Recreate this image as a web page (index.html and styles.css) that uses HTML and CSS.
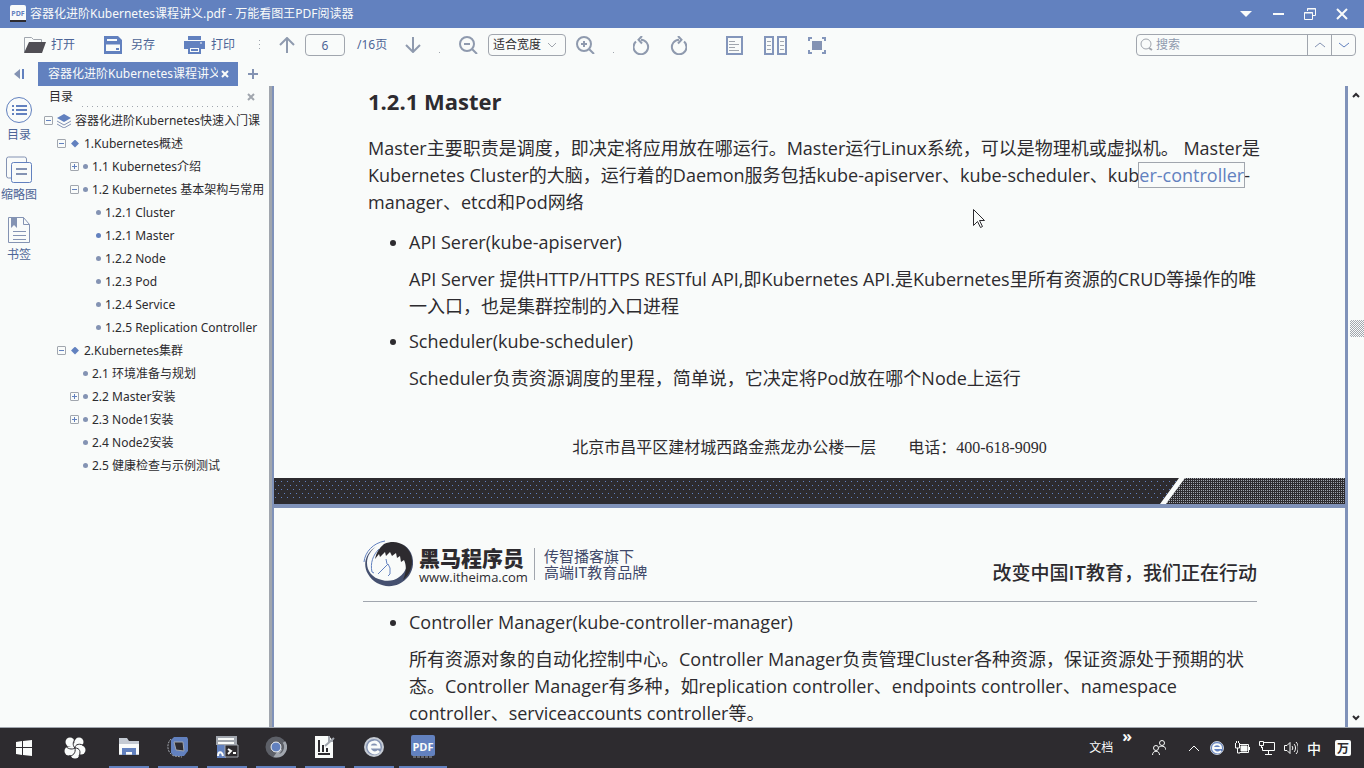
FILE: index.html
```html
<!DOCTYPE html>
<html lang="zh-CN">
<head>
<meta charset="utf-8">
<title>容器化进阶Kubernetes课程讲义.pdf - 万能看图王PDF阅读器</title>
<link rel="stylesheet" href="styles.css">
</head>
<body>
<div class="app">
  <header class="titlebar">
    <svg class="app-icon" width="16" height="18" viewBox="0 0 16 18"><rect width="16" height="17" rx="2" fill="#f9fbfa"/><rect x="0" y="15" width="16" height="2" fill="#2d2b2f"/><text x="8" y="11" text-anchor="middle" class="icon-text icon-text-small" fill="#6281bf">PDF</text></svg>
    <h1 class="title">容器化进阶Kubernetes课程讲义.pdf - 万能看图王PDF阅读器</h1>
    <div class="window-buttons">
      <button class="plain win" aria-label="菜单"><svg width="12" height="12"><path d="M0 3h12l-6 6z" fill="#f9fbfa"/></svg></button>
      <button class="plain win" aria-label="最小化"><svg width="12" height="12"><path d="M1 6h11" stroke="#f9fbfa" stroke-width="2"/></svg></button>
      <button class="plain win" aria-label="还原"><svg width="12" height="12" fill="none" stroke="#f9fbfa"><path d="M3.500 3V.5h8v7h-3M3 1h9M.5 4.500h8v7h-8zM0 5h9"/></svg></button>
      <button class="plain win" aria-label="关闭"><svg width="12" height="12"><path d="M1 1l10 10M11 1L1 11" stroke="#f9fbfa" stroke-width="2"/></svg></button>
    </div>
  </header>

  <div class="toolbar">
    <div class="file-actions">
      <button class="plain action"><svg width="22" height="18"><path d="M.5 16V1.500h7l2 2h8V6" fill="none" stroke="#a1a6ae"/><path d="M5 6h17l-4 11H0z" fill="#504e54"/></svg>打开</button>
      <button class="plain action"><svg width="22" height="18"><path d="M0 0h14l4 4v14H0z" fill="#6281bf"/><path d="M3 4h10M2 9.500h14" stroke="#f9fbfa" stroke-width="2"/><path d="M2 9h14v6H2z" fill="#f9fbfa"/><path d="M12 12h3v2h-3z" fill="#6281bf"/></svg>另存</button>
      <button class="plain action"><svg width="22" height="18"><path d="M4 0h13v4H4zM0 5h21v8h-4v-3H4v3H0z" fill="#6281bf"/><path d="M5 11h11v6H5zM7 14h7" fill="none" stroke="#6281bf" stroke-width="2"/><path d="M16 7h2" stroke="#f9fbfa"/></svg>打印</button>
    </div>
    <span class="sep"></span>
    <div class="group page-nav">
      <button class="plain" aria-label="上一页"><svg class="line-icon" width="16" height="16"><path d="M8 16V1M1 8l7-7 7 7"/></svg></button>
      <input class="page-input" aria-label="页码" value="6">
      <span class="page-total">/16页</span>
      <button class="plain" aria-label="下一页"><svg class="line-icon" width="16" height="16"><path d="M8 0v15M1 8l7 7 7-7"/></svg></button>
    </div>
    <span class="sep one"></span>
    <div class="group zoom-group">
      <button class="plain" aria-label="缩小"><svg class="line-icon" width="19" height="18"><circle cx="8" cy="8" r="7"/><path d="M13 13l5 5M5 8h6"/></svg></button>
      <span class="select-wrap"><select aria-label="缩放"><option>适合宽度</option></select><svg width="10" height="6"><path d="M1 1l4 4 4-4" fill="none" stroke="#a1a6ae"/></svg></span>
      <button class="plain" aria-label="放大"><svg class="line-icon" width="19" height="18"><circle cx="8" cy="8" r="7"/><path d="M13 13l5 5M5 8h6M8 5v6"/></svg></button>
    </div>
    <span class="sep one"></span>
    <div class="group rotate-group">
      <button class="plain" aria-label="向左旋转"><svg class="line-icon" width="18" height="19"><path d="M3 5.500A7.300 7.300 0 1 0 8 3.700M9 0L5.500 3.700 9 7.500"/></svg></button>
      <button class="plain" aria-label="向右旋转"><svg class="line-icon" width="18" height="19"><path d="M15 5.500A7.300 7.300 0 1 1 10 3.700M9 0l3.500 3.700L9 7.500"/></svg></button>
    </div>
    <div class="group view-group">
      <button class="plain" aria-label="单页"><svg width="17" height="19" fill="none"><path d="M1 1h15v17H1z" stroke="#8496bb" stroke-width="2"/><path d="M3 5.500h6M3 8.500h10M3 11.500h6M3 14.500h10" stroke="#a1a6ae"/></svg></button>
      <button class="plain" aria-label="双页"><svg width="23" height="19" fill="none"><path d="M1 1h8v17H1zM14 1h8v17h-8z" stroke="#8496bb" stroke-width="2"/><path d="M3 5.500h4M3 9.500h4M3 13.500h4M16 5.500h4M16 9.500h4M16 13.500h4" stroke="#a1a6ae"/></svg></button>
      <button class="plain" aria-label="全屏"><svg width="18" height="17"><path d="M1 4V1h3M14 1h3v3M1 13v3h3M14 16h3v-3" fill="none" stroke="#8496bb" stroke-width="2"/><path d="M4 4h10v9H4z" fill="#8493b3"/></svg></button>
    </div>
    <form class="search">
      <svg width="14" height="14" fill="none" stroke="#a1a6ae"><circle cx="6" cy="6" r="5"/><path d="M9 10l3 2" stroke-width="2"/></svg>
      <input aria-label="搜索" placeholder="搜索">
      <button type="button" class="plain" aria-label="查找上一个"><svg width="12" height="8"><path d="M1 6l5-4 5 4" fill="none" stroke="#8493b3"/></svg></button>
      <button type="button" class="plain" aria-label="查找下一个"><svg width="12" height="8"><path d="M1 2l5 4 5-4" fill="none" stroke="#6281bf"/></svg></button>
    </form>
  </div>

  <div class="tabs">
    <button class="plain collapse" aria-label="收起"><svg width="10" height="12"><path d="M6 1v10L0 6z" fill="#8493b3"/><path d="M9 1v10" stroke="#6281bf" stroke-width="2"/></svg></button>
    <div class="tab"><span class="tab-title">容器化进阶Kubernetes课程讲义</span><button class="plain" aria-label="关闭标签"><svg width="8" height="8"><path d="M1 1l6 6M7 1L1 7" stroke="#f9fbfa" stroke-width="2"/></svg></button></div>
    <button class="plain add" aria-label="新标签"><svg width="10" height="10"><path d="M5 0v10M0 5h10" stroke="#8493b3" stroke-width="2"/></svg></button>
  </div>

  <div class="body">
    <nav class="rail">
      <button class="plain rail-item"><svg width="28" height="28" fill="none" stroke="#6281bf"><circle cx="14" cy="14" r="12.500"/><path d="M11 10h11M11 14h11M11 18h11M7 10h2M7 14h2M7 18h2" stroke-width="2"/></svg>目录</button>
      <button class="plain rail-item"><svg width="28" height="28" fill="none" stroke="#8493b3"><path d="M6 22H3.500a2 2 0 0 1-2-2V3a2 2 0 0 1 2-2h16a2 2 0 0 1 2 2v3"/><rect x="6.500" y="6.500" width="20" height="20" rx="2" stroke="#6281bf"/><path d="M11 13h11M11 18h11" stroke-width="2"/></svg>缩略图</button>
      <button class="plain rail-item"><svg width="28" height="28" fill="none" stroke="#8493b3"><path d="M3.500 1.500h15l6 7v18h-21zM18.500 1.500v7h6M8 15.500h13M8 19.500h13M8 23.500h13"/><path d="M6 2h6v10l-3-3-3 3z" fill="#8493b3" stroke="none"/></svg>书签</button>
    </nav>
    <aside class="outline">
      <div class="outline-head"><span>目录</span><i class="dotted"></i><button class="plain" aria-label="关闭目录"><svg width="8" height="8"><path d="M1 1l6 6M7 1L1 7" stroke="#a1a6ae" stroke-width="2"/></svg></button></div>
      <ul class="tree">
        <li><div class="row"><b class="box"></b><svg width="14" height="14"><path d="M7 0l7 4-7 4-7-4z" fill="#6281bf"/><path d="M0 7l7 4 7-4M0 10l7 4 7-4" fill="none" stroke="#8493b3"/></svg>容器化进阶Kubernetes快速入门课</div>
          <ul>
            <li><div class="row"><b class="box"></b><i class="dot big"></i>1.Kubernetes概述</div>
              <ul>
                <li><div class="row"><b class="box plus"></b><i class="dot"></i>1.1 Kubernetes介绍</div></li>
                <li><div class="row"><b class="box"></b><i class="dot"></i>1.2 Kubernetes 基本架构与常用</div>
                  <ul>
                    <li><div class="row"><b class="box none"></b><i class="dot"></i>1.2.1 Cluster</div></li>
                    <li><div class="row"><b class="box none"></b><i class="dot current"></i>1.2.1 Master</div></li>
                    <li><div class="row"><b class="box none"></b><i class="dot"></i>1.2.2 Node</div></li>
                    <li><div class="row"><b class="box none"></b><i class="dot"></i>1.2.3 Pod</div></li>
                    <li><div class="row"><b class="box none"></b><i class="dot"></i>1.2.4 Service</div></li>
                    <li><div class="row"><b class="box none"></b><i class="dot"></i>1.2.5 Replication Controller</div></li>
                  </ul>
                </li>
              </ul>
            </li>
            <li><div class="row"><b class="box"></b><i class="dot big"></i>2.Kubernetes集群</div>
              <ul>
                <li><div class="row"><b class="box none"></b><i class="dot"></i>2.1 环境准备与规划</div></li>
                <li><div class="row"><b class="box plus"></b><i class="dot"></i>2.2 Master安装</div></li>
                <li><div class="row"><b class="box plus"></b><i class="dot"></i>2.3 Node1安装</div></li>
                <li><div class="row"><b class="box none"></b><i class="dot"></i>2.4 Node2安装</div></li>
                <li><div class="row"><b class="box none"></b><i class="dot"></i>2.5 健康检查与示例测试</div></li>
              </ul>
            </li>
          </ul>
        </li>
      </ul>
    </aside>
    <div class="splitter"></div>
    <main class="document">
      <section class="page">
        <div class="content">
          <h2>1.2.1 Master</h2>
          <p>Master主要职责是调度，即决定将应用放在哪运行。Master运行Linux系统，可以是物理机或虚拟机。 Master是<br>Kubernetes Cluster的大脑，运行着的Daemon服务包括kube-apiserver、kube-scheduler、kub<span class="selected">er-controller</span>-<br>manager、etcd和Pod网络</p>
          <ul class="bullets">
            <li>API Serer(kube-apiserver)<p>API Server 提供HTTP/HTTPS RESTful API,即Kubernetes API.是Kubernetes里所有资源的CRUD等操作的唯<br>一入口，也是集群控制的入口进程</p></li>
            <li>Scheduler(kube-scheduler)<p>Scheduler负责资源调度的里程，简单说，它决定将Pod放在哪个Node上运行</p></li>
          </ul>
        </div>
        <footer class="page-footer">北京市昌平区建材城西路金燕龙办公楼一层　　电话：400-618-9090</footer>
        <svg class="band" width="100%" height="26">
          <defs>
            <pattern id="sparse" width="6" height="8" patternUnits="userSpaceOnUse"><path d="M1 3h1v1H1zM4 7h1v1H4z" fill="#6281bf"/></pattern>
            <pattern id="dense" width="2" height="2" patternUnits="userSpaceOnUse"><path d="M0 0h1v1H0z" fill="#a1a6ae"/></pattern>
          </defs>
          <rect width="100%" height="26" fill="#2d2b2f"/><rect y="3" width="100%" height="20" fill="url(#sparse)"/>
          <svg x="100%" overflow="visible"><path d="M-160 0H0v26h-179z" fill="#2d2b2f"/><path d="M-160 0H0v26h-179z" fill="url(#dense)"/><path d="M-166 0h6l-19 26h-6z" fill="#f9fbfa"/></svg>
        </svg>
      </section>
      <section class="page second">
        <header class="brand">
          <svg width="50" height="48" viewBox="0 0 50 48"><path d="M14 6C3 12-1 24 5 34c6 11 20 15 31 10 13-6 17-20 12-31-2-4-5-7-9-9 6 6 8 14 5 22-4 12-15 17-25 14C9 38 4 31 4 23c0-7 4-13 10-17z" fill="#45506f"/><path d="M21 4c12-5 23 0 27 11 3 10-1 19-8 25 3-7 4-14 1-20l-3 2-1-6-3 2-1-5-4 3-2-4-4 4-1-4-5 5-1-3-4 5c1-6 4-11 9-15z" fill="#2d2b2f"/><path d="M22 1C10 3 2 12 1 22M16 9c-6 6-9 14-7 23l2 1M15 34l10-10 2 4v6l-2 2M24 24l-1-5" fill="none" stroke="#6281bf"/></svg>
          <div class="brand-name"><strong>黑马程序员</strong><span>www.itheima.com</span></div>
          <div class="brand-note">传智播客旗下<br>高端IT教育品牌</div>
          <div class="slogan">改变中国IT教育，我们正在行动</div>
        </header>
        <div class="content">
          <ul class="bullets">
            <li>Controller Manager(kube-controller-manager)<p>所有资源对象的自动化控制中心。Controller Manager负责管理Cluster各种资源，保证资源处于预期的状<br>态。Controller Manager有多种，如replication controller、endpoints controller、namespace<br>controller、serviceaccounts controller等。</p></li>
          </ul>
        </div>
      </section>
      <svg class="pointer" width="12" height="20"><path d="M.5.5v16l4-4 3 6 2-1-3-6h5z" fill="#f9fbfa" stroke="#2d2b2f"/></svg>
    </main>
    <div class="scrollbar">
      <button class="plain" aria-label="向上滚动"><svg width="8" height="6"><path d="M1 5l3-3 3 3" fill="none" stroke="#2d2b2f" stroke-width="2"/></svg></button>
      <div class="track"><div class="thumb"></div></div>
      <button class="plain" aria-label="向下滚动"><svg width="8" height="6"><path d="M1 1l3 3 3-3" fill="none" stroke="#2d2b2f" stroke-width="2"/></svg></button>
    </div>
  </div>

  <footer class="taskbar">
    <button class="plain task" aria-label="开始"><svg width="16" height="16" fill="#f9fbfa"><path d="M0 2l6-1v6H0zM7 1l9-1v7H7zM0 8h6v7l-6-1zM7 8h9v8l-9-1z"/></svg></button>
    <button class="plain task" aria-label="浏览器"><svg width="22" height="22" viewBox="0 0 22 22"><g fill="#f9fbfa"><circle cx="6" cy="5" r="4.500"/><circle cx="15" cy="5" r="4.500"/><circle cx="17" cy="13" r="4.500"/><circle cx="11" cy="17" r="4.500"/><circle cx="5" cy="14" r="4.500"/><circle cx="11" cy="11" r="5"/></g><path d="M11 11C8 8 9 4 12 1M11 11c0-4 5-5 10-2M11 11c5 0 6 4 4 8M11 11c1 5-2 8-6 8M11 11c-3 2-8 1-10-3" fill="none" stroke="#2d2b2f"/></svg></button>
    <div class="running">
      <button class="plain task on" aria-label="文件资源管理器"><svg width="22" height="20"><path d="M1 1h8l2 3h10v14H1z" fill="#c4cad3"/><path d="M1 7h20v10H1z" fill="#f9fbfa"/><path d="M4 11h14v7h-4v-3H8v3H4z" fill="#6281bf"/></svg></button>
      <button class="plain task on" aria-label="虚拟机"><svg width="22" height="22" fill="none"><path d="M7 1h13l1 2v12l-4 5H7l-3-3V4z" fill="#6281bf"/><path d="M7 6h9l1 9-8-1z" fill="#2d2b2f" stroke="#a1a6ae"/><path d="M4 3C-1 8 0 17 7 20l8 1" stroke="#a1a6ae" stroke-dasharray="2 1"/></svg></button>
      <button class="plain task on" aria-label="终端"><svg width="24" height="24"><path d="M1 1h21v9H1z" fill="#a1a6ae"/><path d="M3 4h16M3 8h16" stroke="#f9fbfa" stroke-width="2"/><path d="M2 10h9v13H2z" fill="#6281bf"/><path d="M10 10h13v12H10z" fill="#2d2b2f" stroke="#a1a6ae"/><path d="M13 14l3 2-3 3M18 18h3M3 21c0-5 4-5 5 0" fill="none" stroke="#f9fbfa" stroke-width="2"/></svg></button>
      <button class="plain task on" aria-label="Chrome"><svg width="22" height="22" fill="none"><circle cx="11" cy="11" r="8" stroke="#5d6068" stroke-width="5"/><path d="M19 6a9 9 0 0 1-8 14l5-7" stroke="#a1a6ae" stroke-width="3"/><circle cx="11" cy="11" r="5" fill="#6281bf" stroke="#f9fbfa"/></svg></button>
      <button class="plain task on" aria-label="编辑器"><svg width="22" height="24"><path d="M1 1h14l4 5v17H1z" fill="#f9fbfa"/><path d="M4 5h2v12H4zM8 10h2v7H8zM12 13h2v4h-2zM4 18h12v2H4z" fill="#2d2b2f"/><path d="M11 11l9-8M15 1v5h4" stroke="#a1a6ae" stroke-width="2" fill="none"/></svg></button>
      <button class="plain task on" aria-label="IE"><svg width="22" height="22" fill="none"><circle cx="11" cy="11" r="9" fill="#8493b3" stroke="#c4cad3" stroke-width="2"/><path d="M16 15c-4 4-10 1-10-4 0-6 10-7 10 0H6" stroke="#f9fbfa" stroke-width="3"/></svg></button>
      <button class="plain task on wide" aria-label="PDF阅读器"><svg width="24" height="24"><rect width="24" height="21" rx="2" fill="#6281bf"/><path d="M2 22h20" stroke="#a1a6ae" stroke-dasharray="3 1"/><text x="12" y="16" text-anchor="middle" class="icon-text" fill="#f9fbfa">PDF</text></svg></button>
    </div>
    <div class="tray">
      <span class="docs">文档</span><span class="more">»</span>
      <svg class="people" width="14" height="16" fill="none" stroke="#f9fbfa"><circle cx="4" cy="8" r="2.500"/><circle cx="10" cy="3" r="2.500"/><path d="M.5 15c0-5 7-5 7 0M7 7c4-2 7 0 7 3"/></svg>
      <svg width="12" height="8"><path d="M1 7l5-5 5 5" fill="none" stroke="#f9fbfa"/></svg>
      <svg width="16" height="16" fill="none"><circle cx="8" cy="8" r="6.500" fill="#6281bf" stroke="#c4cad3"/><path d="M12 11c-3 3-8 1-8-3 0-5 8-5 8 0H4" stroke="#f9fbfa" stroke-width="2"/></svg>
      <svg width="16" height="14" fill="none" stroke="#f9fbfa"><path d="M5.500 3.500h9v8h-9M3.500 7v5H6M1.500 2v5h4V2M2.500 0v2M4.500 0v2M15.500 6v3"/><path d="M7 5h6v5H7z" fill="#f9fbfa"/></svg>
      <svg width="16" height="14" fill="none" stroke="#f9fbfa"><path d="M5 1.500h10.500v8H3.500V6M9.500 9.500v4M6 13.500h7M.5.5h4v4h-4zM2.500 4v3"/></svg>
      <svg width="14" height="14" fill="none" stroke="#f9fbfa"><path d="M.5 4.500H3l3-3v11l-3-3H.5zM8 5c1 1 1 3 0 4M10 3c2 2 2 6 0 8M12 1c3 3 3 9 0 12"/></svg>
      <span class="ime">中</span>
      <span class="ime-box">万</span>
    </div>
  </footer>
</div>
</body>
</html>
```
FILE: styles.css
```css
:root {
  --blue: #6281bf;
  --paper: #f9fbfa;
  --ink: #2d2b2f;
  --gray: #a1a6ae;
}
* { box-sizing: border-box; }
body {
  margin: 0;
  background: var(--paper);
  color: var(--ink);
  font: 12px/16px "Noto Sans", "Noto Sans CJK SC", sans-serif;
}
svg { display: block; flex: none; }
ul { list-style: none; margin: 0; padding: 0; }
input, select, button { font: inherit; color: inherit; }
.plain { border: 0; padding: 0; background: none; display: flex; align-items: center; justify-content: center; }
.app { height: 100vh; display: flex; flex-direction: column; overflow: hidden; }
.icon-text { font: 700 11px "Open Sans", sans-serif; }
.icon-text-small { font-size: 7px; }

.titlebar { flex: none; height: 28px; padding: 0 8px 0 10px; display: flex; align-items: center; background: var(--blue); color: var(--paper); }
.title { margin: 0 auto 0 4px; font-size: 12px; font-weight: 400; white-space: nowrap; }
.window-buttons { display: flex; gap: 4px; }
.win { width: 28px; height: 28px; }

.toolbar { flex: none; height: 34px; padding: 0 8px 0 24px; display: flex; align-items: center; color: #4d6597; white-space: nowrap; }
.file-actions { display: flex; gap: 29px; }
.action { gap: 5px; }
.group { display: flex; align-items: center; }
.sep { width: 1px; height: 11px; margin: 0 19px 0 24px; background: repeating-linear-gradient(var(--gray) 0 1px, transparent 1px 4px); }
.sep.one { height: 1px; margin: 14px 19px 0 18px; }
.page-input { width: 40px; height: 22px; margin: 0 12px 0 10px; padding: 0; border: 1px solid var(--gray); border-radius: 4px; background: none; text-align: center; }
.page-total { width: 48px; }
.line-icon { fill: none; stroke: #8f9aae; stroke-width: 2; }
.zoom-group { gap: 10px; }
.select-wrap { display: flex; align-items: center; width: 78px; height: 22px; padding: 0 8px 0 4px; border: 1px solid var(--gray); border-radius: 4px; color: var(--ink); }
.select-wrap select { flex: 1; min-width: 0; appearance: none; border: 0; padding: 0; background: none; }
.rotate-group { gap: 18px; }
.view-group { gap: 21px; margin-left: 39px; }
.search { display: flex; align-items: center; width: 220px; height: 22px; margin-left: auto; padding-left: 3px; border: 1px solid var(--gray); border-radius: 4px; }
.search input { flex: 1; min-width: 0; margin-left: 2px; border: 0; padding: 0; background: none; }
.search input::placeholder { color: #8f9aae; opacity: 1; }
.search button { width: 24px; height: 20px; border-left: 1px solid var(--gray); }

.tabs { flex: none; height: 24px; display: flex; }
.collapse { width: 38px; }
.tab { width: 200px; padding: 0 9px 0 10px; display: flex; align-items: center; gap: 3px; background: var(--blue); color: var(--paper); }
.tab-title { flex: 1; overflow: hidden; white-space: nowrap; }
.add { width: 30px; }

.body { flex: 1; min-height: 0; display: flex; }
.rail { width: 38px; flex: none; padding-top: 9px; display: flex; flex-direction: column; gap: 12px; }
.rail-item { flex-direction: column; gap: 3px; height: 48px; color: #4d6597; white-space: nowrap; }
.outline { width: 231px; flex: none; padding-left: 6px; overflow: hidden; }
.outline-head { height: 23px; padding: 0 14px 2px 5px; display: flex; align-items: center; gap: 9px; }
.dotted { flex: 1; align-self: flex-end; height: 1px; background: repeating-linear-gradient(90deg, var(--gray) 0 1px, transparent 1px 5px); }
.tree ul { padding-left: 13px; }
.row { height: 23px; display: flex; align-items: center; gap: 4px; white-space: nowrap; }
.box { width: 9px; height: 9px; flex: none; border: 1px solid var(--gray); border-radius: 1px; background: linear-gradient(var(--blue), var(--blue)) center / 5px 1px no-repeat; }
.box.plus { background: linear-gradient(var(--blue), var(--blue)) center / 5px 1px no-repeat, linear-gradient(var(--blue), var(--blue)) center / 1px 5px no-repeat; }
.box.none { visibility: hidden; }
.dot { width: 5px; height: 5px; flex: none; border-radius: 3px; background: #8493b3; }
.dot.current { background: var(--blue); }
.dot.big { width: 8px; height: 8px; margin: 0 1px; border-radius: 4px; background: var(--blue); clip-path: polygon(50% 0, 100% 50%, 50% 100%, 0 50%); }
.splitter { width: 5px; flex: none; background: linear-gradient(90deg, var(--gray) 60%, #8092b9 60%); }

.document { position: relative; flex: 1; min-width: 0; overflow: hidden; font: 18px/27px "Open Sans", "Noto Sans CJK SC", sans-serif; }
.content { padding: 0 80px 0 94px; white-space: nowrap; }
.content h2 { margin: 0 0 19px; font-size: 22px; line-height: 30px; }
.content p { margin: 0; }
.selected { color: var(--blue); outline: 1px solid var(--gray); }
.bullets { padding-left: 41px; display: grid; gap: 8px; list-style: disc; }
.content > p + .bullets { margin-top: 13px; }
.bullets p { margin-top: 10px; }
.page-footer { margin: 44px 0 18px; text-align: center; font: 16px/24px "Liberation Serif", "Noto Sans CJK SC", serif; }
.second { border-top: 4px solid #8092b9; padding-top: 32px; }
.brand { display: flex; align-items: center; margin: 0 88px 7px 89px; padding-bottom: 13px; border-bottom: 1px solid var(--gray); white-space: nowrap; }
.brand-name { display: flex; flex-direction: column; margin-left: 6px; padding-top: 2px; font: 13px/16px "Open Sans", sans-serif; }
.brand-name strong { font: 900 21px/24px "Noto Sans CJK SC", sans-serif; }
.brand-note { margin-left: 6px; padding-left: 9px; border-left: 1px solid var(--gray); font: 15px/16px "Noto Sans CJK SC", sans-serif; color: #40496a; }
.slogan { margin-left: auto; padding-top: 16px; font: 500 19px/24px "Noto Sans CJK SC", sans-serif; }
.pointer { position: absolute; left: 699px; top: 123px; }

.scrollbar { width: 19px; flex: none; border-left: 3px solid #8092b9; display: flex; flex-direction: column; }
.scrollbar button { height: 18px; }
.track { flex: 1; padding-top: 216px; }
.thumb { height: 17px; margin-left: 2px; background: conic-gradient(var(--gray) 25%, var(--paper) 0 50%, var(--gray) 0 75%, var(--paper) 0) 0 0 / 2px 2px; }

.taskbar { flex: none; height: 41px; display: flex; align-items: stretch; padding: 0 13px 0 4px; border-top: 1px solid var(--gray); background: var(--ink); color: var(--paper); }
.task { width: 40px; }
.task + .task { margin-left: 11px; }
.running { display: flex; gap: 9px; margin-left: 14px; }
.running .task { margin: 0; border-bottom: 2px solid var(--blue); }
.running .wide { width: 48px; margin-left: -4px; }
.tray { margin-left: auto; display: flex; align-items: center; gap: 9px; }
.more { align-self: flex-start; font: 700 16px/16px "Open Sans", sans-serif; }
.people { margin: 0 13px 0 11px; }
.ime { font: 500 14px/20px "Noto Sans CJK SC", sans-serif; }
.ime-box { width: 16px; height: 16px; margin-left: 5px; border-radius: 2px; background: var(--paper); color: var(--ink); font: 700 12px/16px "Noto Sans CJK SC", sans-serif; text-align: center; }
```
